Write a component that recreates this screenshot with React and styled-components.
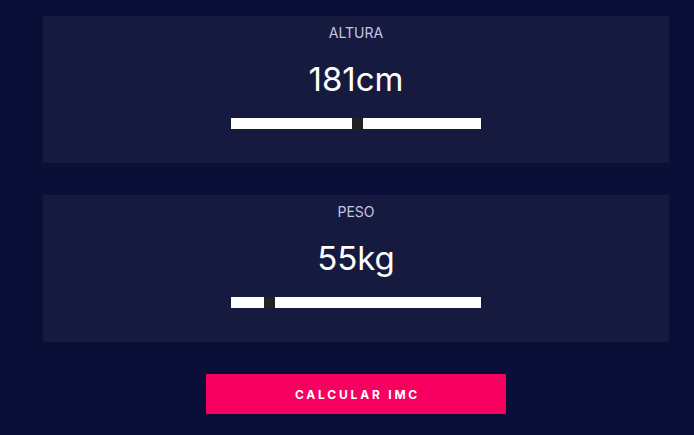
import styled, { createGlobalStyle } from 'styled-components';
import { useState } from 'react';

const Global = createGlobalStyle`
  body {
    margin: 0;
    background: #0b0e37;
    font-family: Inter, "Noto Sans", sans-serif;
  }
`

const Page = styled.div`
  width: 626px;
  margin-left: 43px;
  padding-top: 16px;
  display: flex;
  flex-direction: column;
  gap: 32px;
`

const Card = styled.div`
  background: #161a3e;
  height: 147px;
  box-sizing: border-box;
  padding-top: 7px;
  display: flex;
  flex-direction: column;
  align-items: center;
`

const Label = styled.div`
  font-size: 14px;
  line-height: 20px;
  color: #c3c6e6;
  text-transform: uppercase;
`

const Value = styled.div`
  margin-top: 16px;
  font-size: 33px;
  line-height: 40px;
  color: #fff;
`

const Range = styled.input`
  -webkit-appearance: none;
  appearance: none;
  margin: 19px 0 0;
  width: 250px;
  height: 11px;
  background: #fff;
  outline: none;
  &::-webkit-slider-runnable-track {
    height: 11px;
    background: #fff;
  }
  &::-webkit-slider-thumb {
    -webkit-appearance: none;
    width: 11px;
    height: 11px;
    background: #222;
    border: none;
    border-radius: 0;
  }
`

const Button = styled.button`
  align-self: center;
  width: 300px;
  height: 40px;
  border: none;
  background: #f7005f;
  color: #fff;
  font-family: Inter, sans-serif;
  font-weight: 700;
  font-size: 12px;
  letter-spacing: 2.8px;
  padding: 0 0 0 3px;
  cursor: pointer;
`

function Field({ label, unit, min, max, value, onChange }){
  return(
    <Card>
      <Label>{label}</Label>
      <Value>{value}{unit}</Value>
      <Range type="range" min={min} max={max} value={value} onChange={e=>onChange(+e.target.value)} />
    </Card>
  )
}

export default function App(){
  const [altura, setAltura] = useState(181);
  const [peso, setPeso] = useState(55);
  return(
    <>
      <Global />
      <Page>
        <Field label="Altura" unit="cm" min={100} max={260} value={altura} onChange={setAltura} />
        <Field label="Peso" unit="kg" min={30} max={210} value={peso} onChange={setPeso} />
        <Button>CALCULAR IMC</Button>
      </Page>
    </>
  )
}
